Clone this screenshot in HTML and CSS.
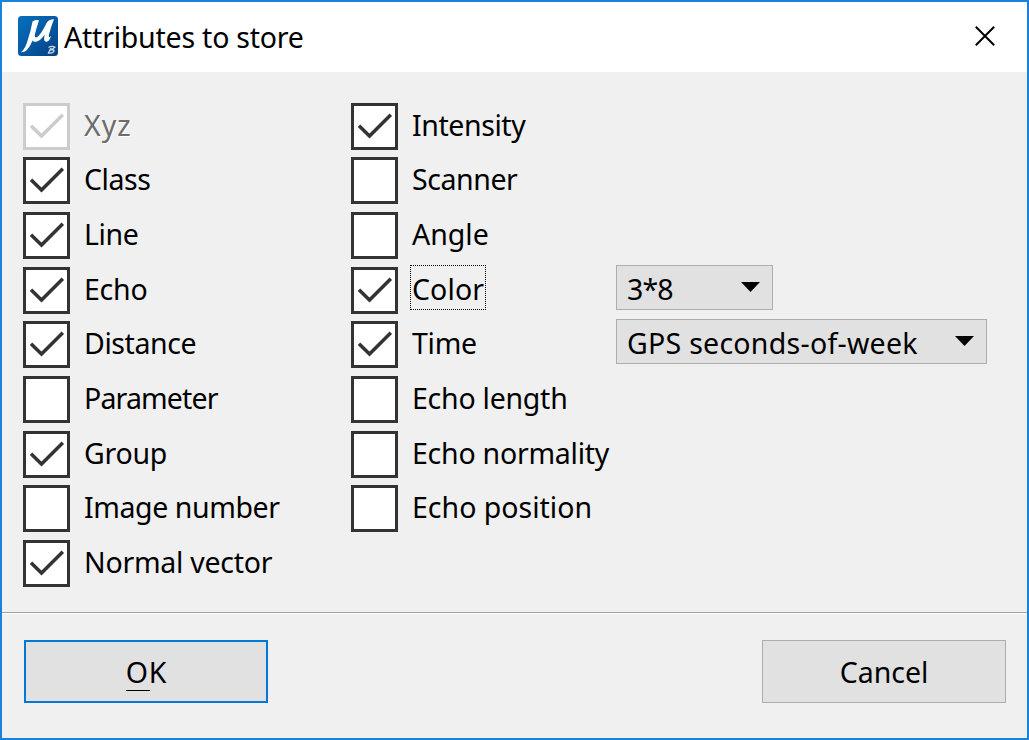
FILE: index.html
```html
<!DOCTYPE html>
<html lang="en">
<head>
<meta charset="utf-8">
<title>Attributes to store</title>
<link rel="stylesheet" href="styles.css">
</head>
<body>
<svg class="defs" aria-hidden="true">
  <symbol id="check" viewBox="0 0 41 41"><path d="M5 19.800 15.500 30 36.800 8.800" fill="none" stroke="currentColor" stroke-width="3.500"/></symbol>
</svg>
<main class="dialog">
  <header class="titlebar">
    <svg class="logo" viewBox="0 0 40 40">
      <defs><linearGradient id="blue" x1="0" y1="0" x2="1" y2="1"><stop offset="0" stop-color="#0870bd"/><stop offset=".5" stop-color="#0459a4"/><stop offset="1" stop-color="#06417f"/></linearGradient></defs>
      <rect width="40" height="40" rx="3.500" fill="url(#blue)"/>
      <path d="M14.500 5.500Q17.500 3.500 21 4.300Q18.500 12 17 18C16 22 18.500 22.500 21 19.500C24.500 15 27 10.500 28.800 6.500Q31.500 3 36 3.200Q32.500 12 31 18.500C30.300 22 31.500 21.500 33 20Q31.500 25.500 28.500 25.800C25.500 26 26 21.500 26.700 18.500C23.500 23.500 19.500 26.500 16 25.700L14.500 24.500C11.500 31.500 8.500 36.500 3 36.300Q7 33 9.300 25.500Q13 14.500 14.500 5.500Z" fill="#fff"/>
      <path d="M30.500 31.500Q34 29.500 37 31.200Q35.500 33.300 31.500 33.500Q37 33.300 35.800 35.500Q33.500 37.800 30.500 37Q31.500 34.500 33 32.500" fill="none" stroke="#c8d9ea" stroke-width="1.300"/>
    </svg>
    <h1 class="title">Attributes to store</h1>
    <svg class="close" viewBox="0 0 20 20"><path d="M.8.800 19.200 19.200M19.200.800.800 19.200" stroke="#000" stroke-width="2"/></svg>
  </header>
  <section class="options">
    <div class="column first">
      <div class="row disabled"><span class="box"><svg><use href="#check"/></svg></span><span class="label">Xyz</span></div>
      <div class="row"><span class="box"><svg><use href="#check"/></svg></span><span class="label tight">Class</span></div>
      <div class="row"><span class="box"><svg><use href="#check"/></svg></span><span class="label tight">Line</span></div>
      <div class="row"><span class="box"><svg><use href="#check"/></svg></span><span class="label snug">Echo</span></div>
      <div class="row"><span class="box"><svg><use href="#check"/></svg></span><span class="label tight">Distance</span></div>
      <div class="row"><span class="box"></span><span class="label tighter">Parameter</span></div>
      <div class="row"><span class="box"><svg><use href="#check"/></svg></span><span class="label snug">Group</span></div>
      <div class="row"><span class="box"></span><span class="label tight">Image number</span></div>
      <div class="row"><span class="box"><svg><use href="#check"/></svg></span><span class="label snug">Normal vector</span></div>
    </div>
    <div class="column second">
      <div class="row"><span class="box"><svg><use href="#check"/></svg></span><span class="label tight">Intensity</span></div>
      <div class="row"><span class="box"></span><span class="label tight">Scanner</span></div>
      <div class="row"><span class="box"></span><span class="label">Angle</span></div>
      <div class="row"><span class="box"><svg><use href="#check"/></svg></span><span class="label focused">Color</span></div>
      <div class="row"><span class="box"><svg><use href="#check"/></svg></span><span class="label snug">Time</span></div>
      <div class="row"><span class="box"></span><span class="label snug">Echo length</span></div>
      <div class="row"><span class="box"></span><span class="label snug">Echo normality</span></div>
      <div class="row"><span class="box"></span><span class="label">Echo position</span></div>
    </div>
    <div class="column selects">
      <div class="select short"><span class="tighter">3*8</span><svg class="arrow" viewBox="0 0 19 10"><path d="M0 0H19L9.500 10Z"/></svg></div>
      <div class="select"><span class="wide">GPS seconds-of-week</span><svg class="arrow" viewBox="0 0 19 10"><path d="M0 0H19L9.500 10Z"/></svg></div>
    </div>
  </section>
  <footer class="actions">
    <div class="button primary"><span><span class="key">O</span>K</span></div>
    <div class="button"><span>Cancel</span></div>
  </footer>
</main>
</body>
</html>
```
FILE: styles.css
```css
* { box-sizing: border-box; }
body { margin: 0; font: 28.5px/40px "Noto Sans", "Open Sans", sans-serif; color: #000; }
.defs { display: none; }
.dialog { width: 1029px; height: 740px; border: 2px solid #1a82da; background: #f0f0f0; display: flex; flex-direction: column; overflow: hidden; }
.titlebar { height: 70px; flex: none; background: #fff; display: flex; align-items: flex-start; padding: 14px 32px 0 16px; }
.logo { width: 40px; height: 40px; flex: none; }
.title { margin: 1px 0 0 6px; font-size: inherit; font-weight: 400; white-space: nowrap; letter-spacing: -.22px; }
.close { width: 20px; height: 20px; margin: 10px 0 0 auto; }
.options { height: 540px; flex: none; padding: 30.6px 0 0 21px; display: grid; grid-template-columns: 328px 265px 371px; }
.row { height: 54.67px; display: flex; align-items: flex-start; }
.box { width: 47px; height: 47px; flex: none; border: 3px solid #333; background: #fff; color: #333; }
.box svg { display: block; width: 41px; height: 41px; }
.label { margin: 2px 0 0 14px; white-space: nowrap; }
.snug { letter-spacing: -.25px; }
.tight { letter-spacing: -.42px; }
.tighter { letter-spacing: -.85px; }
.wide { letter-spacing: .27px; }
.disabled .box { border-color: #ccc; color: #ccc; }
.disabled .label { color: #6d6d6d; text-shadow: 1px 1px #fff; letter-spacing: 1px; }
.focused { height: 45px; margin: -2px 0 0 12px; padding: 3px 1px 0; border: 1px dotted #000; width: 76px; letter-spacing: .1px; }
.selects { padding-top: 162.4px; display: flex; flex-direction: column; gap: 9px; }
.select { width: 371px; height: 45px; border: 1px solid #adadad; background: #e1e1e1; display: flex; justify-content: space-between; padding: 3px 12px 0 10px; white-space: nowrap; }
.select.short { width: 157px; }
.arrow { width: 19px; height: 10px; margin-top: 13px; }
.actions { flex: 1; border-top: 1px solid #a0a0a0; box-shadow: inset 0 1px #fff; padding: 27px 21px 0 22px; display: flex; justify-content: space-between; }
.button { width: 244px; height: 63px; border: 1px solid #adadad; background: #e1e1e1; display: flex; justify-content: center; padding-top: 11px; }
.primary { border: 2px solid #0078d7; padding-top: 10px; }
.key { display: inline-block; width: 24px; height: 39px; margin-right: -1px; border-bottom: 1px solid #000; }
```
